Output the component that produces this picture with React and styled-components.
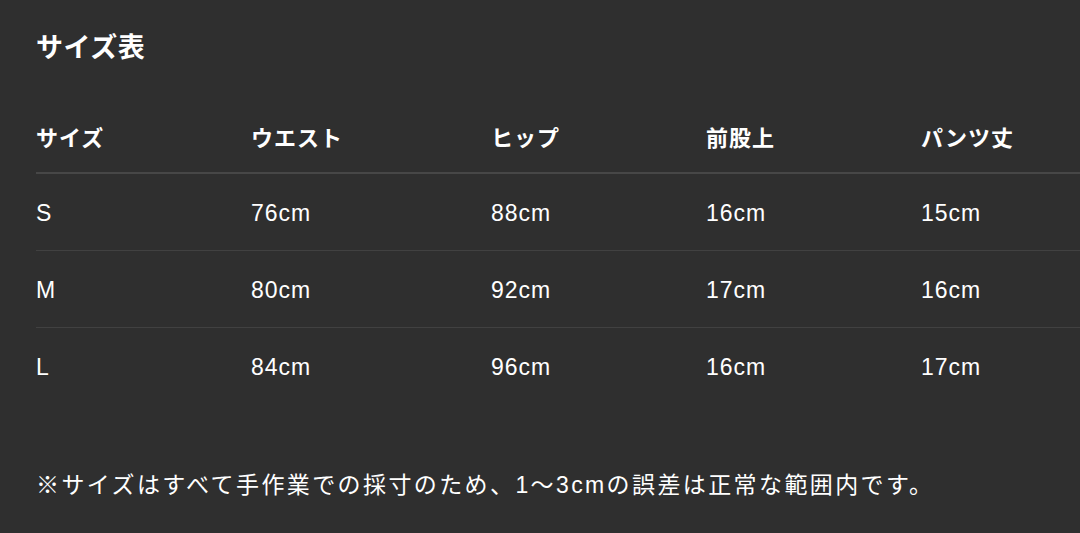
import React from 'react';
import styled, { createGlobalStyle } from 'styled-components';

const GlobalStyle = createGlobalStyle`
    html, body {
        margin: 0;
        padding: 0;
        background: #2f2f2f;
    }
    body {
        font-family: "Liberation Sans", "Noto Sans CJK JP", sans-serif;
        color: #ffffff;
    }
`;

const Wrapper = styled.div`
    width: 1080px;
    height: 533px;
    padding: 28px 0 0 36px;
    box-sizing: border-box;
    background: #2f2f2f;
    overflow: hidden;
`;

const Title = styled.h2`
    margin: 0;
    font-size: 27px;
    font-weight: 700;
    line-height: 40px;
    letter-spacing: 0.5px;
`;

const Table = styled.div`
    margin-top: 32px;
    display: flex;
    flex-direction: column;
`;

const Row = styled.div`
    display: grid;
    grid-template-columns: 215px 240px 215px 215px 1fr;
    align-items: center;
    box-sizing: border-box;
    height: ${(p) => (p.$head ? '74px' : '77px')};
    padding-top: ${(p) => (p.$head ? '6px' : '1px')};
    border-bottom: ${(p) => (p.$head ? '2px solid #474747' : p.$last ? 'none' : '1px solid #414141')};
`;

const Cell = styled.div`
    font-size: ${(p) => (p.$head ? '22px' : '23px')};
    font-weight: ${(p) => (p.$head ? 700 : 400)};
    letter-spacing: 1px;
    line-height: 30px;
    white-space: nowrap;
`;

const Note = styled.p`
    margin: 60px 0 0;
    font-size: 23px;
    line-height: 40px;
    letter-spacing: 2.4px;
    white-space: nowrap;
`;

const headers = ['サイズ', 'ウエスト', 'ヒップ', '前股上', 'パンツ丈'];

const rows = [
    ['S', '76cm', '88cm', '16cm', '15cm'],
    ['M', '80cm', '92cm', '17cm', '16cm'],
    ['L', '84cm', '96cm', '16cm', '17cm'],
];

function App() {
    return (
        <>
            <GlobalStyle />
            <Wrapper>
                <Title>サイズ表</Title>
                <Table>
                    <Row $head>
                        {headers.map((h) => (
                            <Cell $head key={h}>{h}</Cell>
                        ))}
                    </Row>
                    {rows.map((r, i) => (
                        <Row key={r[0]} $last={i === rows.length - 1}>
                            {r.map((v, j) => (
                                <Cell key={j}>{v}</Cell>
                            ))}
                        </Row>
                    ))}
                </Table>
                <Note>※サイズはすべて手作業での採寸のため、1～3cmの誤差は正常な範囲内です。</Note>
            </Wrapper>
        </>
    );
}

export default App;
